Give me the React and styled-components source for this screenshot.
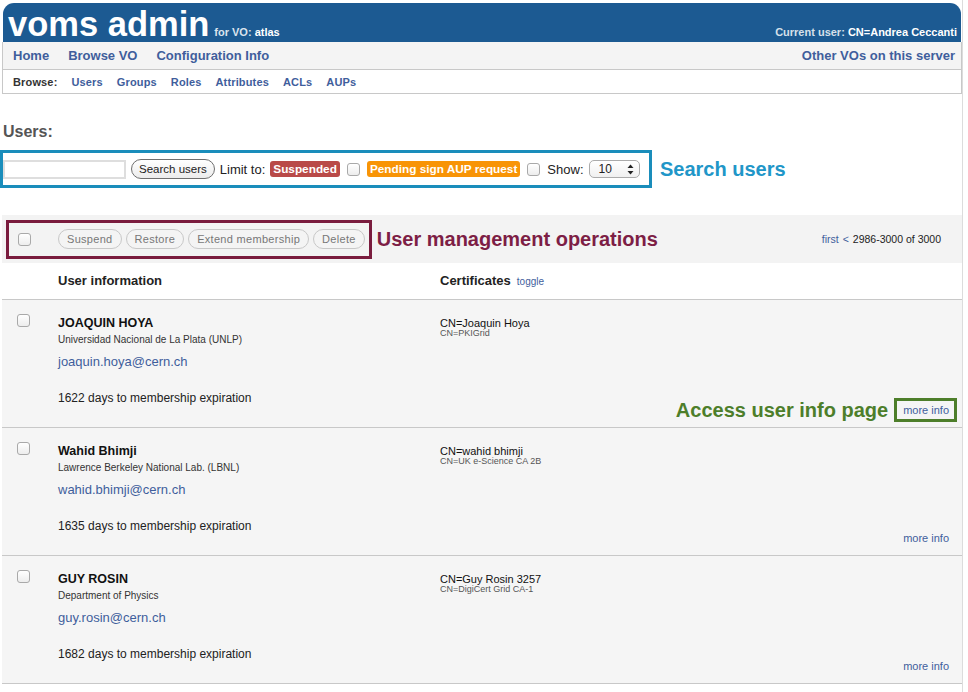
import styled, { createGlobalStyle } from "styled-components";

const GlobalStyle = createGlobalStyle`
  html, body {
    margin: 0;
    padding: 0;
    background: #fff;
  }
  body {
    font-family: "Liberation Sans", Arial, sans-serif;
    color: #222;
  }
`;

const Page = styled.div`
  box-sizing: border-box;
  width: 961px;
  min-height: 692px;
  margin-left: 2px;
  padding-top: 3px;
  border-right: 1px solid #dcdcdc;
`;

const Header = styled.header`
  box-sizing: border-box;
  height: 39px;
  margin: 0 1px;
  padding: 4px 4px 0 5px;
  display: flex;
  align-items: baseline;
  background: #1c5a92;
  border-radius: 11px 11px 0 0;
  color: #fff;
`;

const Logo = styled.span`
  font-size: 34.5px;
  line-height: 34px;
  font-weight: 700;
`;

const VoName = styled.span`
  margin-left: 5px;
  font-size: 11px;
  font-weight: 700;
  color: #dbe4ee;

  b {
    color: #fff;
  }
`;

const CurrentUser = styled.span`
  margin-left: auto;
  font-size: 11px;
  font-weight: 700;
  color: #d6e0ea;

  b {
    color: #fff;
  }
`;

const NavBar = styled.nav`
  box-sizing: border-box;
  height: 28px;
  padding: 0 6px 0 10px;
  display: flex;
  align-items: center;
  gap: 19px;
  background: #f4f4f4;
  border: 1px solid #c8c8c8;
  border-top: none;
`;

const NavLink = styled.a`
  font-size: 13px;
  font-weight: 700;
  color: #3f5e9c;
  text-decoration: none;
  margin-left: ${(p) => (p.$right ? "auto" : "0")};
`;

const SubNav = styled.nav`
  box-sizing: border-box;
  height: 24px;
  padding: 0 10px;
  display: flex;
  align-items: center;
  gap: 14px;
  border: 1px solid #c8c8c8;
  border-top: none;
  font-size: 11px;
  font-weight: 700;
  letter-spacing: 0.15px;
`;

const SubLabel = styled.span`
  color: #333;
`;

const SubLink = styled.a`
  color: #3f5e9c;
  text-decoration: none;
`;

const Title = styled.h2`
  margin: 28px 0 0 1px;
  font-size: 16px;
  line-height: 20px;
  font-weight: 700;
  color: #555;
`;

const SearchRow = styled.div`
  margin: 8px 0 0 -2px;
  display: flex;
  align-items: center;
  gap: 8px;
`;

const SearchPanel = styled.div`
  box-sizing: border-box;
  width: 652px;
  height: 38px;
  display: flex;
  align-items: center;
  gap: 5px;
  border: 3px solid #1a8dbb;
  font-size: 13px;
`;

const TextInput = styled.input`
  box-sizing: border-box;
  width: 123px;
  height: 19px;
  margin: 0;
  border: 2px solid #dedede;
  background: #fff;
  outline: none;
`;

const PillButton = styled.button`
  box-sizing: border-box;
  height: 20px;
  padding: 0 ${(p) => (p.$muted ? "8px" : "7px")};
  border: 1px solid ${(p) => (p.$muted ? "#c8c8c8" : "#6f6f6f")};
  border-radius: 10px;
  background: ${(p) =>
    p.$muted ? "#f4f4f4" : "linear-gradient(#ffffff, #ececec)"};
  font-family: "Liberation Sans", Arial, sans-serif;
  font-size: ${(p) => (p.$muted ? "11px" : "11.5px")};
  letter-spacing: ${(p) => (p.$muted ? "0.3px" : "0")};
  color: ${(p) => (p.$muted ? "#777" : "#222")};
  white-space: nowrap;
`;

const Label = styled.span`
  color: #222;
  white-space: nowrap;
`;

const Badge = styled.span`
  height: 16px;
  padding: 0 3px;
  display: inline-flex;
  align-items: center;
  border-radius: 3px;
  background: ${(p) => p.$bg};
  color: #fff;
  font-size: 11.8px;
  font-weight: 700;
  white-space: nowrap;
`;

const Check = styled.input.attrs({ type: "checkbox" })`
  appearance: none;
  box-sizing: border-box;
  width: 13px;
  height: 13px;
  margin: 0 ${(p) => (p.$space ? "2px" : "0")};
  border: 1px solid #a9a9a9;
  border-radius: 3px;
  background: linear-gradient(#ffffff, #ededed);
`;

const SelectBox = styled.div`
  box-sizing: border-box;
  width: 51px;
  height: 18px;
  padding: 0 5px 0 9px;
  display: flex;
  align-items: center;
  justify-content: space-between;
  border: 1px solid #ababab;
  border-radius: 5px;
  background: linear-gradient(#ffffff, #f0f0f0);
  font-size: 12px;
`;

const Annotation = styled.span`
  font-size: 20px;
  font-weight: 700;
  color: ${(p) => p.$color};
  white-space: nowrap;
`;

const Toolbar = styled.div`
  box-sizing: border-box;
  height: 48px;
  margin-top: 27px;
  padding: 0 21px 0 4px;
  display: flex;
  align-items: center;
  gap: 5px;
  background: #f3f3f3;
`;

const OpsBox = styled.div`
  box-sizing: border-box;
  height: 39px;
  padding: 0 4px 0 9px;
  display: flex;
  align-items: center;
  gap: 4px;
  border: 3px solid #7a1c3e;
`;

const OpsCheck = styled(Check)`
  margin-right: 23px;
`;

const Pager = styled.div`
  margin-left: auto;
  font-size: 10.5px;
  color: #222;

  a {
    color: #3f5e9c;
    text-decoration: none;
    margin-right: 4px;
  }
`;

const Grid = styled.div`
  box-sizing: border-box;
  display: grid;
  grid-template-columns: 56px 382px 1fr;
  border-bottom: 1px solid #c8c8c8;
`;

const HeadRow = styled(Grid)`
  height: 37px;
  padding-top: 10px;
  font-size: 13px;
  line-height: 16px;
  font-weight: 700;
`;

const Toggle = styled.a`
  margin-left: 6px;
  font-size: 10px;
  font-weight: 400;
  color: #3f5e9c;
  text-decoration: none;
`;

const UserRow = styled(Grid)`
  min-height: 128px;
  padding: 13px 5px 5px 0;
  background: #f5f5f5;
`;

const CheckCell = styled.div`
  padding-left: 15px;
`;

const UserCell = styled.div`
  padding-top: 3px;
  display: flex;
  flex-direction: column;
`;

const Name = styled.div`
  font-size: 12.5px;
  line-height: 14px;
  font-weight: 700;
  color: #111;
`;

const Institution = styled.div`
  margin-top: 3px;
  font-size: 10px;
  line-height: 14px;
  color: #333;
`;

const Email = styled.a`
  margin-top: 7px;
  font-size: 13px;
  line-height: 16px;
  color: #3f5e9c;
  text-decoration: none;
`;

const Expiration = styled.div`
  margin-top: 21px;
  font-size: 12px;
  line-height: 14px;
  color: #222;
`;

const CertCell = styled.div`
  padding-top: 4px;
  display: flex;
  flex-direction: column;
`;

const CertDn = styled.div`
  font-size: 11px;
  line-height: 12px;
  color: #111;
`;

const CertCa = styled.div`
  font-size: 9px;
  line-height: 9px;
  color: #555;
`;

const MoreRow = styled.div`
  margin-top: auto;
  align-self: flex-end;
  display: flex;
  align-items: center;
  gap: 6px;
`;

const MoreInfo = styled.a`
  box-sizing: border-box;
  height: 24px;
  padding: 0 5px 0 6px;
  display: flex;
  align-items: center;
  border: 3px solid ${(p) => (p.$marked ? "#4d7e2a" : "transparent")};
  font-size: 11px;
  color: #3f5e9c;
  text-decoration: none;
`;

const users = [
  {
    name: "JOAQUIN HOYA",
    institution: "Universidad Nacional de La Plata (UNLP)",
    email: "joaquin.hoya@cern.ch",
    days: 1622,
    dn: "CN=Joaquin Hoya",
    ca: "CN=PKIGrid",
    marked: true,
  },
  {
    name: "Wahid Bhimji",
    institution: "Lawrence Berkeley National Lab. (LBNL)",
    email: "wahid.bhimji@cern.ch",
    days: 1635,
    dn: "CN=wahid bhimji",
    ca: "CN=UK e-Science CA 2B",
  },
  {
    name: "GUY ROSIN",
    institution: "Department of Physics",
    email: "guy.rosin@cern.ch",
    days: 1682,
    dn: "CN=Guy Rosin 3257",
    ca: "CN=DigiCert Grid CA-1",
  },
];

const SelectArrows = () => (
  <svg width="7" height="11" viewBox="0 0 7 11">
    <path d="M3.5 0.5 L6.5 4 H0.5 Z" fill="#222" />
    <path d="M3.5 10.5 L6.5 7 H0.5 Z" fill="#222" />
  </svg>
);

const App = () => {
  return (
    <Page>
      <GlobalStyle />
      <Header>
        <Logo>voms admin</Logo>
        <VoName>
          for VO: <b>atlas</b>
        </VoName>
        <CurrentUser>
          Current user: <b>CN=Andrea Ceccanti</b>
        </CurrentUser>
      </Header>
      <NavBar>
        <NavLink>Home</NavLink>
        <NavLink>Browse VO</NavLink>
        <NavLink>Configuration Info</NavLink>
        <NavLink $right>Other VOs on this server</NavLink>
      </NavBar>
      <SubNav>
        <SubLabel>Browse:</SubLabel>
        <SubLink>Users</SubLink>
        <SubLink>Groups</SubLink>
        <SubLink>Roles</SubLink>
        <SubLink>Attributes</SubLink>
        <SubLink>ACLs</SubLink>
        <SubLink>AUPs</SubLink>
      </SubNav>

      <Title>Users:</Title>
      <SearchRow>
        <SearchPanel>
          <TextInput />
          <PillButton>Search users</PillButton>
          <Label>Limit to:</Label>
          <Badge $bg="#b94a48">Suspended</Badge>
          <Check $space />
          <Badge $bg="#f89406">Pending sign AUP request</Badge>
          <Check $space />
          <Label>Show:</Label>
          <SelectBox>
            10
            <SelectArrows />
          </SelectBox>
        </SearchPanel>
        <Annotation $color="#2196c8">Search users</Annotation>
      </SearchRow>

      <Toolbar>
        <OpsBox>
          <OpsCheck />
          <PillButton $muted>Suspend</PillButton>
          <PillButton $muted>Restore</PillButton>
          <PillButton $muted>Extend membership</PillButton>
          <PillButton $muted>Delete</PillButton>
        </OpsBox>
        <Annotation $color="#7d1e45">User management operations</Annotation>
        <Pager>
          <a>first</a>
          <a>&lt;</a>
          2986-3000 of 3000
        </Pager>
      </Toolbar>

      <HeadRow>
        <div />
        <div>User information</div>
        <div>
          Certificates<Toggle>toggle</Toggle>
        </div>
      </HeadRow>

      {users.map((u) => (
        <UserRow key={u.email}>
          <CheckCell>
            <Check />
          </CheckCell>
          <UserCell>
            <Name>{u.name}</Name>
            <Institution>{u.institution}</Institution>
            <Email>{u.email}</Email>
            <Expiration>{u.days} days to membership expiration</Expiration>
          </UserCell>
          <CertCell>
            <CertDn>{u.dn}</CertDn>
            <CertCa>{u.ca}</CertCa>
            <MoreRow>
              {u.marked && (
                <Annotation $color="#4d7e2a">Access user info page</Annotation>
              )}
              <MoreInfo $marked={u.marked}>more info</MoreInfo>
            </MoreRow>
          </CertCell>
        </UserRow>
      ))}
    </Page>
  );
};

export default App;
